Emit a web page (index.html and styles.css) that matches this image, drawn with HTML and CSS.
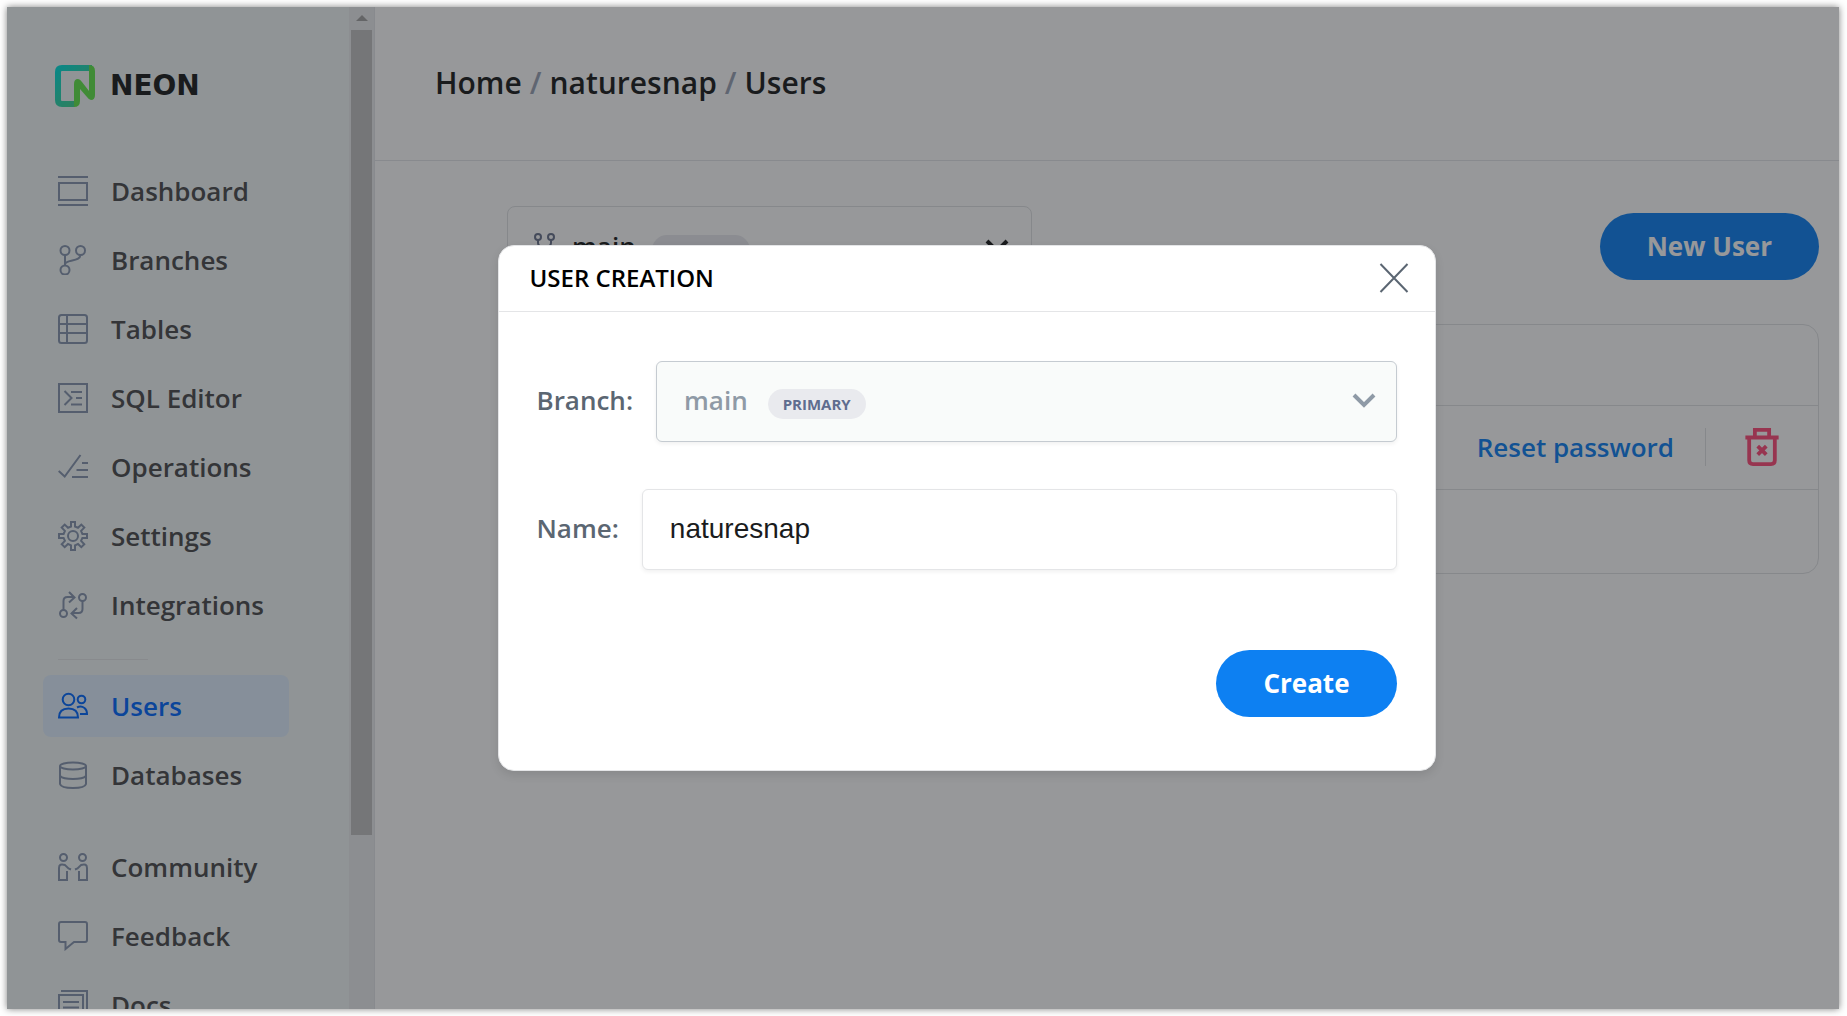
FILE: index.html
```html
<!DOCTYPE html>
<html lang="en">
<head>
<meta charset="utf-8">
<title>Users – naturesnap – Neon</title>
<link rel="stylesheet" href="styles.css">
</head>
<body>
<div class="window">
  <aside class="sidebar">
    <div class="sidebar-content">
      <a class="brand" href="#">
        <svg class="brand-mark" viewBox="0 0 40 42" fill="none">
          <defs>
            <linearGradient id="teal" x1="0" y1="0" x2="1" y2="1">
              <stop offset="0" stop-color="#00e0d9"/><stop offset="1" stop-color="#55cf7c"/>
            </linearGradient>
          </defs>
          <path d="M37 3H7Q3 3 3 7v28q0 4 4 4h13" stroke="url(#teal)" stroke-width="6"/>
          <path d="M34 0Q40 0 40 6V30Q40 35 36 35Q34 35 32 32L25 24V36Q25 42 19 42V19Q19 14 23 14Q25 14 27 17L34 26Z" fill="#62e84a"/>
        </svg>
        <span class="brand-name">NEON</span>
      </a>
      <nav class="menu">
        <a class="menu-item" href="#"><svg viewBox="0 0 30 30"><path d="M0 1h30M1 7h28v17H1zM0 29h30"/></svg>Dashboard</a>
        <a class="menu-item" href="#"><svg viewBox="0 0 30 30"><circle cx="7" cy="5.500" r="4.500"/><circle cx="22.500" cy="5.500" r="4.500"/><circle cx="7" cy="25" r="4.500"/><path d="M7 10v10.500M7 19c2-5 15-2 15.500-9"/></svg>Branches</a>
        <a class="menu-item" href="#"><svg viewBox="0 0 30 30"><rect x="1" y="1" width="28" height="28" rx="2.500"/><path d="M9 1v28M1 10h28M1 19h28"/></svg>Tables</a>
        <a class="menu-item" href="#"><svg viewBox="0 0 30 30"><path d="M1 1h28v28H1zM6.500 8l7 7-7 7M13 9h11M18 15h6M13 21.500h11"/></svg>SQL Editor</a>
        <a class="menu-item" href="#"><svg viewBox="0 0 30 30"><path d="M.7 19l6 5.500L22.500 3M24 11h6M18.500 18H30M14 25h16"/></svg>Operations</a>
        <a class="menu-item" href="#"><svg viewBox="0 0 30 30"><path d="M13 1h4v4.500l3 1.300 3.300-3.200 3 3-3.200 3.300 1.300 3H29v4h-4.600l-1.300 3 3.200 3.300-3 3-3.300-3.200-3 1.300V29h-4v-4.700l-3-1.300-3.300 3.200-3-3 3.200-3.300-1.300-3H1v-4h4.600l1.300-3-3.200-3.300 3-3L10 6.800l3-1.300z"/><circle cx="15" cy="15" r="5"/></svg>Settings</a>
        <a class="menu-item" href="#"><svg viewBox="0 0 30 30"><circle cx="5.500" cy="23.500" r="3.500"/><circle cx="24.500" cy="7.500" r="3.500"/><path d="M5.500 20v-9q0-4 4-4h6.500M11 2l5.500 5.500L11 12.500M24.500 11v8q0 4-4 4H14M19 18l-5.500 5.500L19 28.500"/></svg>Integrations</a>
        <hr class="menu-divider">
        <a class="menu-item active" href="#"><svg viewBox="0 0 30 30"><circle cx="10.500" cy="8.500" r="5.800"/><circle cx="23.500" cy="8.500" r="3.800"/><path d="M1 26.500q0-9 9.500-9t9.500 9zM19 16.500q4-2 7.500.5Q29 19 29 23h-7"/></svg>Users</a>
        <a class="menu-item" href="#"><svg viewBox="0 0 30 30"><ellipse cx="15" cy="6" rx="13" ry="3.500"/><path d="M2 6v18q1 4 13 4t13-4V6M2 16q3 3 13 3t13-3"/></svg>Databases</a>
        <div class="menu-gap"></div>
        <a class="menu-item" href="#"><svg viewBox="0 0 30 30"><circle cx="5.500" cy="5.500" r="3.500"/><circle cx="24.500" cy="5.500" r="3.500"/><path d="M13 17.500l-2.500-1L7 13Q1 11 1 16v12h8v-9M17 17.500l2.500-1L23 13q6-2 6 3v12h-8v-9"/></svg>Community</a>
        <a class="menu-item" href="#"><svg viewBox="0 0 30 30"><path d="M3 1h24q2 0 2 2v16q0 2-2 2H16l-8.500 7v-7H3q-2 0-2-2V3q0-2 2-2z"/></svg>Feedback</a>
        <a class="menu-item" href="#"><svg viewBox="0 0 30 30"><path d="M3 1h26v28M1 5h24v24H1zM5 12h16M5 17.500h16M5 23h10"/></svg>Docs</a>
      </nav>
    </div>
    <div class="scrollbar"><span class="scroll-up"></span><span class="scroll-thumb"></span></div>
  </aside>

  <main class="content">
    <header class="topbar">
      <nav class="crumbs"><a href="#">Home</a><span>/</span><a href="#">naturesnap</a><span>/</span><a href="#">Users</a></nav>
    </header>
    <section class="panel">
      <div class="toolbar">
        <button class="branch-picker" type="button">
          <svg class="fork" viewBox="0 0 22 26"><circle cx="4" cy="4" r="3"/><circle cx="17" cy="4" r="3"/><circle cx="10.500" cy="22" r="3"/><path d="M4 7v3q0 4 6.500 4T17 10V7M10.500 14v5"/></svg>
          <span>main</span><span class="pill">PRIMARY</span>
          <svg class="chevron" viewBox="0 0 24 16"><path d="M2 3l10 10L22 3"/></svg>
        </button>
        <button class="button" type="button">New User</button>
      </div>
      <div class="users">
        <div class="users-row"></div>
        <div class="users-row">
          <a class="reset" href="#">Reset password</a>
          <button class="delete" type="button" aria-label="Delete user"><svg viewBox="0 0 38 40"><path d="M1.500 10h35M11.500 9V2h15v7M5.500 11v23q0 4 4 4h19q4 0 4-4V11M14.500 19l9 9M23.500 19l-9 9"/></svg></button>
        </div>
        <div class="users-row"></div>
      </div>
    </section>
  </main>

  <div class="backdrop">
    <form class="dialog" role="dialog" aria-labelledby="dialog-title">
      <header class="dialog-header">
        <h2 id="dialog-title">USER CREATION</h2>
        <button class="close" type="button" aria-label="Close"><svg viewBox="0 0 30 32"><path d="M1.500 2l27 28M28.500 2l-27 28"/></svg></button>
      </header>
      <div class="dialog-body">
        <div class="field branch-field">
          <label for="branch">Branch:</label>
          <button id="branch" class="branch-select" type="button" disabled><span>main</span><span class="pill">PRIMARY</span>
            <svg class="chevron" viewBox="0 0 24 16"><path d="M2 3l10 10L22 3"/></svg></button>
        </div>
        <div class="field">
          <label for="name">Name:</label>
          <input id="name" type="text" value="naturesnap">
        </div>
        <button class="button create" type="submit">Create</button>
      </div>
    </form>
  </div>
</div>
</body>
</html>
```
FILE: styles.css
```css
* { box-sizing: border-box; }

body {
  margin: 0;
  padding: 7px 8px 7px 7px;
  height: 100vh;
  overflow: hidden;
  background: #fff;
  color: #1a1c1d;
  font: 600 26px/36px "Open Sans", sans-serif;
}

a { color: inherit; text-decoration: none; }
button, input { font: inherit; }
svg { flex: none; fill: none; stroke: currentColor; stroke-width: 2; }

.window {
  position: relative;
  display: flex;
  height: 100%;
  overflow: hidden;
  background: #fff;
}
body::before {
  content: "";
  position: fixed;
  inset: 7px 8px 7px 7px;
  box-shadow: 0 0 7px rgba(0, 0, 0, .5);
}

.sidebar {
  display: flex;
  flex: none;
  width: 368px;
  background: #f2f8f8;
  border-right: 1px solid #e4e5ea;
}
.sidebar-content { flex: 1; padding: 58px 60px 0 36px; }
.brand { display: flex; align-items: center; gap: 15px; padding-left: 12px; }
.brand-mark { width: 40px; height: 42px; stroke: none; }
.brand-name { font: 700 28px/42px "DejaVu Sans", sans-serif; }

.menu { padding-top: 53px; }
.menu-item {
  display: flex;
  align-items: center;
  gap: 23px;
  height: 62px;
  margin-bottom: 7px;
  padding-left: 15px;
  border-radius: 8px;
  color: #4b4c4e;
}
.menu-item svg { width: 30px; height: 30px; color: #8796b0; }
.menu-item.active { background: #e0efff; color: #0068ff; }
.menu-item.active svg { color: inherit; }
.menu-divider {
  width: 90px;
  margin: 23px 0 15px 15px;
  border: 0;
  border-top: 1px solid #e4e5e7;
}
.menu-gap { height: 23px; }

.scrollbar {
  display: flex;
  flex-direction: column;
  align-items: center;
  gap: 9px;
  width: 25px;
  padding-top: 8px;
  background: #ecedef;
}
.scroll-up {
  border: 6px solid transparent;
  border-top-width: 0;
  border-bottom-color: #a3a3a3;
}
.scroll-thumb { width: 21px; height: 81%; background: #c1c1c1; }

.content { flex: 1; }
.topbar { padding: 57px 60px 58px; border-bottom: 1px solid #e4e5ea; }
.crumbs { display: flex; gap: 8px; font-size: 30px; line-height: 38px; }
.crumbs span { color: #9aa3b5; }

.panel { padding: 45px 20px 0 132px; }
.toolbar { display: flex; justify-content: space-between; align-items: center; }
.branch-picker {
  display: flex;
  align-items: center;
  gap: 16px;
  width: 525px;
  height: 80px;
  padding: 0 22px 0 26px;
  border: 1px solid #e0e2e4;
  border-radius: 8px;
  background: #fff;
  color: #1a1c1d;
}
.fork { width: 22px; height: 26px; color: #6a748c; }
.chevron { width: 24px; height: 16px; margin-left: auto; stroke-width: 4; }

.pill {
  margin-top: 8px;
  padding: 0 15px;
  border-radius: 15px;
  background: #e9eaee;
  color: #5f6d8f;
  font-size: 15px;
  font-weight: 700;
  line-height: 30px;
}

.button {
  height: 67px;
  padding: 0 47px;
  border: 0;
  border-radius: 34px;
  background: #0d80f2;
  color: #fff;
  font-weight: 700;
}

.users {
  margin-top: 38px;
  border: 1px solid #e0e2e4;
  border-radius: 16px;
}
.users-row {
  display: flex;
  align-items: center;
  justify-content: flex-end;
  height: 84px;
  padding: 0 37px 2px 0;
}
.users-row:first-child { height: 80px; }
.users-row + .users-row { border-top: 1px solid #e0e2e4; }
.reset { padding-right: 31px; color: #0d80f2; }
.delete {
  display: flex;
  padding: 0 0 0 37px;
  border: 0;
  border-left: 1px solid #e0e2e4;
  background: none;
  color: #ff4c79;
}
.delete svg { width: 38px; height: 38px; stroke-width: 4; }

.backdrop {
  position: absolute;
  inset: 0;
  display: flex;
  justify-content: center;
  align-items: center;
  padding: 0 0 1px 87px;
  background: rgba(24, 26, 30, .45);
}
.dialog {
  width: 938px;
  border: 1px solid #e4e5e7;
  border-radius: 16px;
  background: #fff;
  box-shadow: 0 4px 10px rgba(0, 0, 0, .1);
}
.dialog-header {
  display: flex;
  justify-content: space-between;
  align-items: center;
  height: 66px;
  padding: 0 26px 0 31px;
  border-bottom: 1px solid #e4e5e7;
}
.dialog-header h2 { margin: 0; color: #000; font-size: 24px; font-weight: 600; line-height: 36px; }
.close { display: flex; padding: 0; border: 0; background: none; color: #5b6672; }
.close svg { width: 30px; height: 32px; }

.dialog-body { display: flex; flex-direction: column; padding: 49px 38px 53px; }
.field { display: flex; align-items: center; gap: 23px; color: #5b6672; }
.field label { padding-bottom: 2px; }
.branch-field { margin-bottom: 47px; }
.branch-select, .field input {
  flex: 1;
  min-width: 0;
  height: 81px;
  padding: 0 20px 0 27px;
  border: 1px solid #e4e5e7;
  border-radius: 6px;
  background: #fff;
  box-shadow: 0 2px 4px rgba(0, 0, 0, .06);
}
.branch-select {
  display: flex;
  align-items: center;
  gap: 20px;
  padding-bottom: 2px;
  border-color: #c5cbd1;
  background: #f9fbfa;
  color: #8f9aa6;
}
.field input { color: #1a1c1d; font: 28px "Liberation Sans", sans-serif; }
.create { align-self: flex-end; margin-top: 80px; }
```
